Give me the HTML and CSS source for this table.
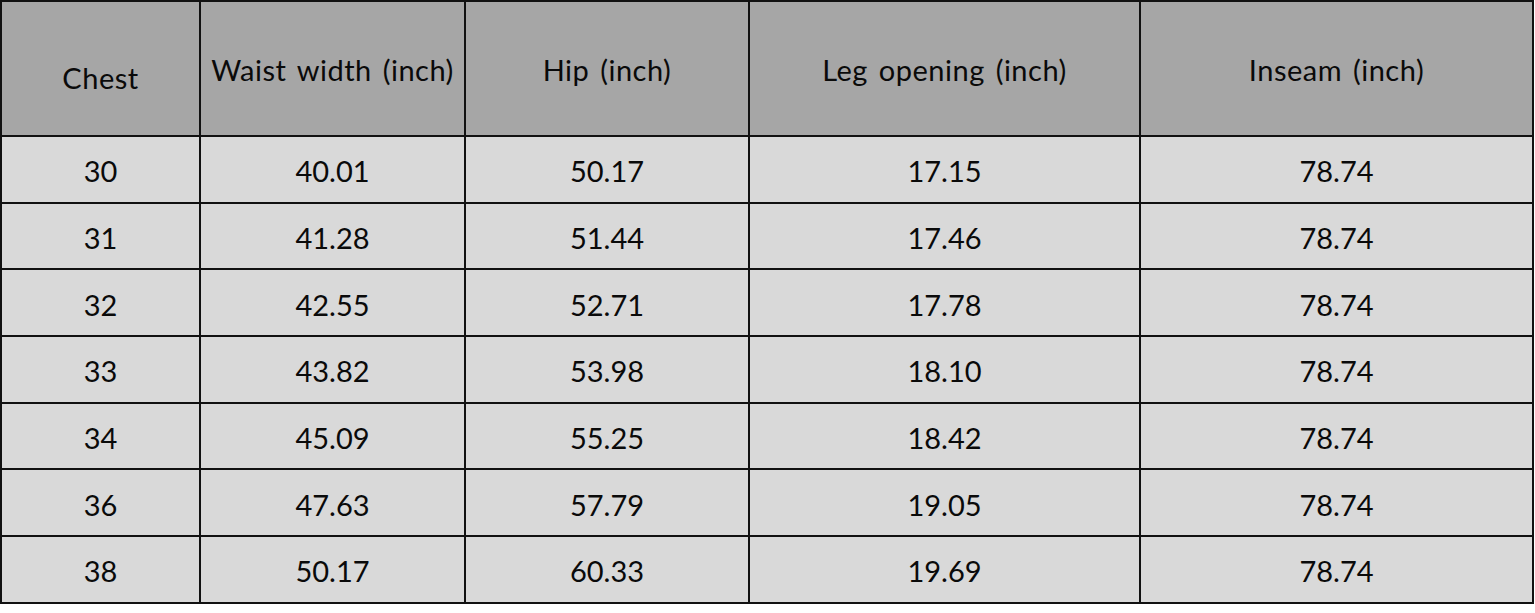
FILE: index.html
```html
<!DOCTYPE html>
<html lang="en">
<head>
<meta charset="utf-8">
<title>Size chart</title>
<link rel="stylesheet" href="styles.css">
</head>
<body>
<table class="size-table">
  <colgroup>
    <col class="c1"><col class="c2"><col class="c3"><col class="c4"><col class="c5">
  </colgroup>
  <thead>
    <tr>
      <th class="chest">Chest</th>
      <th>Waist width (inch)</th>
      <th>Hip (inch)</th>
      <th>Leg opening (inch)</th>
      <th>Inseam (inch)</th>
    </tr>
  </thead>
  <tbody>
    <tr><td>30</td><td>40.01</td><td>50.17</td><td>17.15</td><td>78.74</td></tr>
    <tr><td>31</td><td>41.28</td><td>51.44</td><td>17.46</td><td>78.74</td></tr>
    <tr><td>32</td><td>42.55</td><td>52.71</td><td>17.78</td><td>78.74</td></tr>
    <tr><td>33</td><td>43.82</td><td>53.98</td><td>18.10</td><td>78.74</td></tr>
    <tr><td>34</td><td>45.09</td><td>55.25</td><td>18.42</td><td>78.74</td></tr>
    <tr><td>36</td><td>47.63</td><td>57.79</td><td>19.05</td><td>78.74</td></tr>
    <tr><td>38</td><td>50.17</td><td>60.33</td><td>19.69</td><td>78.74</td></tr>
  </tbody>
</table>
</body>
</html>
```
FILE: styles.css
```css
html, body {
  margin: 0;
  padding: 0;
  background: #ffffff;
}
.size-table {
  border-collapse: collapse;
  table-layout: fixed;
  width: 1532px;
  font-family: "Lato", "Open Sans", sans-serif;
  font-size: 29px;
  color: #0a0a0a;
}
.c1 { width: 199px; }
.c2 { width: 265px; }
.c3 { width: 284px; }
.c4 { width: 391px; }
.c5 { width: 393px; }
.size-table th,
.size-table td {
  border: 2px solid #111111;
  text-align: center;
  padding: 0;
  box-sizing: border-box;
}
.size-table th {
  background: #a6a6a6;
  font-weight: normal;
  height: 135px;
  vertical-align: top;
  padding-top: 50px;
  letter-spacing: 0.5px;
  word-spacing: 3px;
}
.size-table th.chest {
  padding-top: 58px;
}
.size-table td {
  background: #d9d9d9;
  height: 66.7px;
  padding-top: 3px;
}
```
